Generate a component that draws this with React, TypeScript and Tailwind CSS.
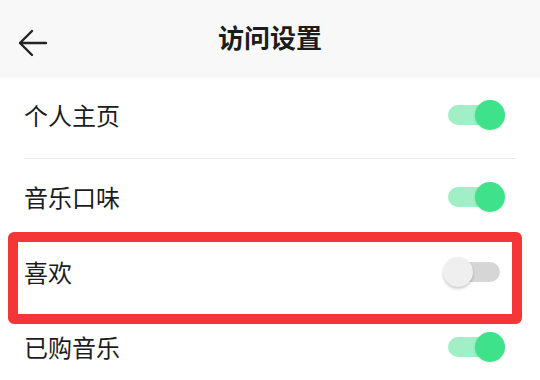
import React from 'react';

const rows = [
  { label: '个人主页', on: true, h: 'h-[80px] pb-[6px]' },
  { label: '音乐口味', on: true, h: 'h-[77px] pb-[2px]' },
  { label: '喜欢', on: false, h: 'h-[75px] pb-[4px]' },
  { label: '已购音乐', on: true, h: 'h-[78px] pb-[7px]' },
];

function Toggle({ on }: { on: boolean }) {
  return (
    <div className="relative w-[52px] h-[20px]">
      <div className={`absolute inset-0 rounded-full ${on ? 'bg-[#a0efc6]' : 'bg-[#d6d6d6]'}`} />
      {on ? (
        <div className="absolute -right-[5px] -top-[5px] w-[30px] h-[30px] rounded-full bg-[#3ee28b] shadow-[0_1px_3px_rgba(0,0,0,0.12)]" />
      ) : (
        <div className="absolute -left-[5px] -top-[5px] w-[30px] h-[30px] rounded-full bg-[#efefef] shadow-[0_2px_3px_rgba(0,0,0,0.2)]" />
      )}
    </div>
  );
}

export default function App() {
  return (
    <div className="relative w-[540px] h-[380px] overflow-hidden bg-white" style={{ fontFamily: '"Noto Sans CJK SC", "Noto Sans", sans-serif' }}>
      <div className="relative h-[78px] bg-[#f8f8f8] flex items-center justify-center">
        <svg className="absolute left-[18px] top-[29px]" width="30" height="28" viewBox="0 0 30 28" fill="none" stroke="#222" strokeWidth="2.4" strokeLinecap="round" strokeLinejoin="round">
          <path d="M28 14H2.5" />
          <path d="M14 2L2 14l12 12" />
        </svg>
        <h1 className="text-[26px] font-bold text-[#1c1c1c] leading-none mt-[-4px]">访问设置</h1>
      </div>
      <div>
        {rows.map((r, i) => (
          <div key={r.label}>
            <div className={`${r.h} flex items-center justify-between pl-[24px] pr-[40px]`}>
              <span className="text-[24px] text-[#1c1c1c] leading-none">{r.label}</span>
              <Toggle on={r.on} />
            </div>
            {i === 0 && <div className="ml-[24px] mr-[24px] h-px bg-[#ebebeb]" />}
          </div>
        ))}
      </div>
      <div className="absolute left-[8px] top-[232px] w-[514px] h-[92px] border-[10px] border-[#f43636] rounded-[6px]" />
    </div>
  );
}
